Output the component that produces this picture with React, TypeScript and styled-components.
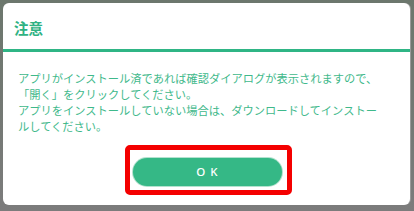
import React from "react";
import styled, { createGlobalStyle } from "styled-components";

const Global = createGlobalStyle`
  html, body { margin: 0; padding: 0; }
  body { width: 414px; height: 211px; overflow: hidden; }
`;

const Page = styled.div`
  width: 414px;
  height: 211px;
  box-sizing: border-box;
  padding: 3px 4px 6px 3px;
  background: linear-gradient(180deg, #6c776d 0%, #737873 50%, #7c7c7c 100%);
  display: flex;
`;

const Dialog = styled.div`
  flex: 1;
  background: #ffffff;
  border-radius: 6px;
  display: flex;
  flex-direction: column;
  box-shadow: 1px 0 0 #9a9a9a;
`;

const Header = styled.div`
  height: 44px;
  padding: 2px 0 0 11px;
  display: flex;
  align-items: center;
  border-bottom: 3px solid #2fb585;
`;

const Title = styled.h2`
  margin: 0;
  font-family: "Noto Sans CJK JP", sans-serif;
  font-size: 14.5px;
  font-weight: 700;
  color: #2fb283;
  letter-spacing: 0;
`;

const Body = styled.div`
  padding: 18px 10px 0 15px;
`;

const Message = styled.p`
  margin: 0;
  font-family: "Noto Sans CJK JP", sans-serif;
  font-size: 11.25px;
  line-height: 16px;
  color: #3fb98b;
  white-space: nowrap;
`;

const Footer = styled.div`
  display: flex;
  justify-content: center;
  padding: 11px 0 0 4px;
`;

const Highlight = styled.div`
  box-sizing: border-box;
  width: 167px;
  height: 50px;
  border: 5.5px solid #f40000;
  border-radius: 5px;
  display: flex;
  align-items: center;
  justify-content: center;
  padding: 3px 3px 0 0;
`;

const OkButton = styled.button`
  width: 149px;
  height: 28px;
  border: none;
  border-radius: 14px;
  background: #35b886;
  box-shadow: 0 0 0 1px #b3e2cf;
  color: #ffffff;
  font-family: "Noto Sans", "Liberation Sans", sans-serif;
  font-size: 11.5px;
  font-weight: 500;
  letter-spacing: 5px;
  padding: 0 0 0 5px;
  cursor: pointer;
`;

export default function App() {
  return (
    <>
      <Global />
      <Page>
        <Dialog>
          <Header>
            <Title>注意</Title>
          </Header>
          <Body>
            <Message>
              アプリがインストール済であれば確認ダイアログが表示されますので、
              <br />
              「開く」をクリックしてください。
              <br />
              アプリをインストールしていない場合は、ダウンロードしてインストー
              <br />
              ルしてください。
            </Message>
          </Body>
          <Footer>
            <Highlight>
              <OkButton>OK</OkButton>
            </Highlight>
          </Footer>
        </Dialog>
      </Page>
    </>
  );
}
